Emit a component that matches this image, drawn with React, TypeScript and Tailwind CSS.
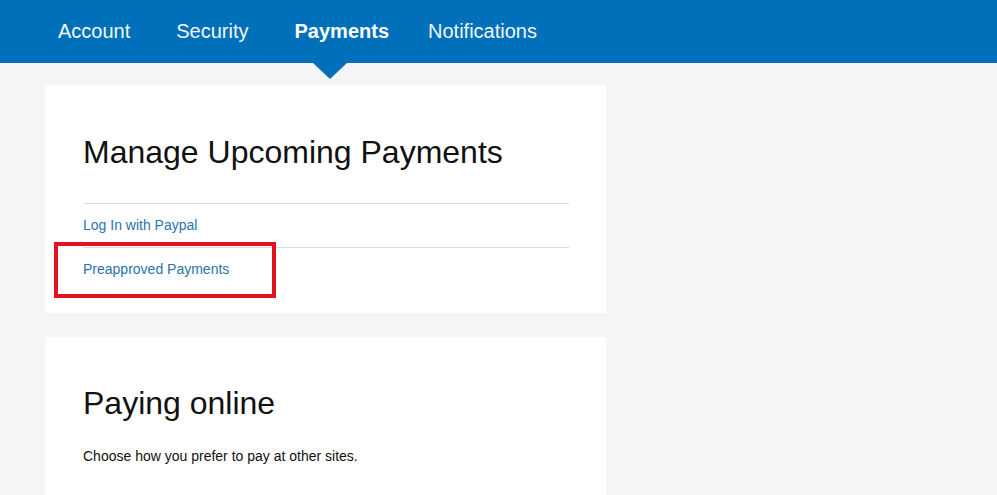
import React from 'react'

const tabs = [
  { label: 'Account', ml: 'ml-[58px]' },
  { label: 'Security', ml: 'ml-[46px]' },
  { label: 'Payments', ml: 'ml-[46px]', active: true },
  { label: 'Notifications', ml: 'ml-[39px]' },
]

export default function App() {
  return (
    <div
      className="min-h-[495px] bg-[#f5f5f5] overflow-hidden"
      style={{ fontFamily: '"Liberation Sans", Arial, sans-serif' }}
    >
      {/* Top nav */}
      <nav className="h-[63px] bg-[#0070ba] flex items-start pt-[17px]">
        {tabs.map((t) => (
          <div key={t.label} className={`relative ${t.ml}`}>
            <span
              className={`text-[20px] leading-[28px] text-white ${
                t.active ? 'font-bold' : 'font-normal opacity-95'
              }`}
            >
              {t.label}
            </span>
            {t.active && (
              <div className="absolute left-[18px] top-[46px] w-0 h-0 border-l-[17px] border-r-[17px] border-t-[16px] border-l-transparent border-r-transparent border-t-[#0070ba]" />
            )}
          </div>
        ))}
      </nav>

      <main className="pl-[45px] pt-[22px] flex flex-col gap-[24px]">
        {/* Manage Upcoming Payments */}
        <section className="relative w-[561px] bg-white pl-[38px] pr-[37px] pt-[48px] pb-[22px]">
          <h1 className="text-[32px] leading-[38px] text-[#111]">Manage Upcoming Payments</h1>
          <ul className="mt-[32px] border-t border-[#dcdcdc] text-[14px] leading-[21px]">
            <li className="py-[11px] border-b border-[#dcdcdc]">
              <a href="#" className="text-[#2a73ad]">
                Log In with Paypal
              </a>
            </li>
            <li className="py-[11px]">
              <a href="#" className="text-[#2a73ad]">
                Preapproved Payments
              </a>
            </li>
          </ul>
          {/* highlight annotation */}
          <div className="absolute left-[9px] top-[157px] w-[222px] h-[56px] border-[4px] border-[#e0141e]" />
        </section>

        {/* Paying online */}
        <section className="w-[561px] bg-white pl-[38px] pr-[37px] pt-[47px] pb-[60px]">
          <h2 className="text-[32px] leading-[38px] text-[#111]">Paying online</h2>
          <p className="mt-[24px] text-[14px] leading-[20px] text-[#111]">
            Choose how you prefer to pay at other sites.
          </p>
        </section>
      </main>
    </div>
  )
}
